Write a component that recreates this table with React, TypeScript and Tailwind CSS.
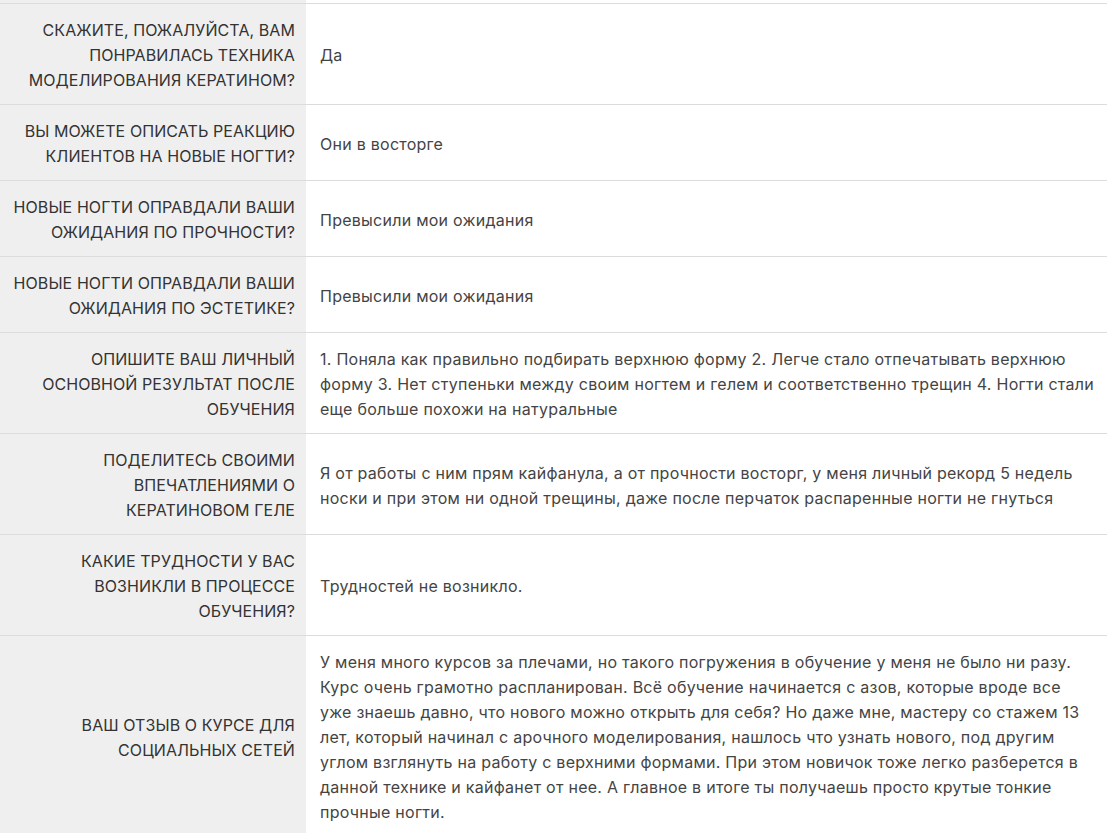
import React from "react";

const rows: { q: string; a: string }[] = [
  { q: "Скажите, пожалуйста, вам понравилась техника моделирования кератином?", a: "Да" },
  { q: "Вы можете описать реакцию клиентов на новые ногти?", a: "Они в восторге" },
  { q: "Новые ногти оправдали ваши ожидания по прочности?", a: "Превысили мои ожидания" },
  { q: "Новые ногти оправдали ваши ожидания по эстетике?", a: "Превысили мои ожидания" },
  {
    q: "Опишите ваш личный основной результат после обучения",
    a: "1. Поняла как правильно подбирать верхнюю форму 2. Легче стало отпечатывать верхнюю форму 3. Нет ступеньки между своим ногтем и гелем и соответственно трещин 4. Ногти стали еще больше похожи на натуральные",
  },
  {
    q: "Поделитесь своими впечатлениями о кератиновом геле",
    a: "Я от работы с ним прям кайфанула, а от прочности восторг, у меня личный рекорд 5 недель носки и при этом ни одной трещины, даже после перчаток распаренные ногти не гнуться",
  },
  { q: "Какие трудности у вас возникли в процессе обучения?", a: "Трудностей не возникло." },
  {
    q: "Ваш отзыв о курсе для социальных сетей",
    a: "У меня много курсов за плечами, но такого погружения в обучение у меня не было ни разу. Курс очень грамотно распланирован. Всё обучение начинается с азов, которые вроде все уже знаешь давно, что нового можно открыть для себя? Но даже мне, мастеру со стажем 13 лет, который начинал с арочного моделирования, нашлось что узнать нового, под другим углом взглянуть на работу с верхними формами. При этом новичок тоже легко разберется в данной технике и кайфанет от нее. А главное в итоге ты получаешь просто крутые тонкие прочные ногти.",
  },
];

export default function App() {
  return (
    <div
      className="w-[1108px] h-[833px] overflow-hidden bg-white"
      style={{ fontFamily: "Inter, 'Noto Sans', sans-serif" }}
    >
      <div className="w-[1107px]">
        <div className="grid grid-cols-[306px_1fr] h-[3px]">
          <div className="bg-[#efefef]" />
          <div />
        </div>
        {rows.map((r, i) => (
          <div key={i} className="grid grid-cols-[306px_1fr] border-t border-[#dcdcdc]">
            <div className="bg-[#efefef] pl-2 pr-[11px] pt-[14px] pb-[11px] flex items-center justify-end text-right uppercase text-[16px] leading-[25px] tracking-[0.005em] text-[#333333]">
              {r.q}
            </div>
            <div className="pl-[14px] pr-[13px] pt-[14px] pb-[11px] flex items-center text-[16px] leading-[25px] tracking-[0.016em] text-[#444444]">
              {r.a}
            </div>
          </div>
        ))}
      </div>
    </div>
  );
}
